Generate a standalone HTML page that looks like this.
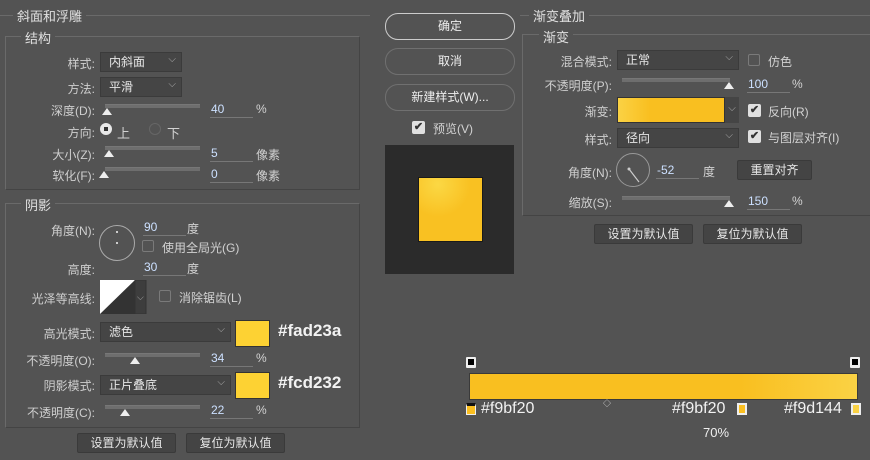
<!DOCTYPE html>
<html><head><meta charset="utf-8"><style>
body{margin:0;width:870px;height:460px;background:#535353;position:relative;overflow:hidden;font-family:"Liberation Sans","Noto Sans CJK SC",sans-serif;font-size:12px;color:#d2d2d2}
.a{position:absolute;white-space:nowrap}
.box{position:absolute;border:1px solid #6a6a6a;border-right-color:#444;border-bottom-color:#444;box-sizing:border-box}
.lg{position:absolute;background:#535353;padding:0 4px;font-size:13px;color:#e0e0e0}
.lab{position:absolute;text-align:right;width:95px;left:0;color:#cfcfcf}
.dd{position:absolute;background:#454545;border:1px solid #3b3b3b;box-sizing:border-box;height:20px;line-height:18px;padding-left:8px;color:#e6e6e6}
.dd:after{content:"⌵";position:absolute;right:5px;top:-2px;font-size:10px;color:#aaa}
.tr{position:absolute;height:3px;background:#6e6e6e;border-top:1px solid #777}
.th{position:absolute;width:0;height:0;border-left:5px solid transparent;border-right:5px solid transparent;border-bottom:7px solid #eee}
.in{position:absolute;border-bottom:1px solid #777;width:42px;color:#cce0ff;padding-left:1px;height:15px}
.btn{position:absolute;background:#444;border:1px solid #3a3a3a;box-sizing:border-box;height:20px;line-height:18px;text-align:center;color:#e6e6e6;border-radius:2px}
.rb{position:absolute;border:1px solid #8a8a8a;border-radius:13px;box-sizing:border-box;height:27px;line-height:25px;text-align:center;color:#eee;width:130px;left:385px}
.cb{position:absolute;width:12px;height:12px;border:1px solid #7a7a7a;box-sizing:border-box;border-radius:2px}
.cbk{position:absolute;width:13px;height:13px;background:#e0e0e0;border-radius:2px;color:#333;font-size:11px;line-height:13px;text-align:center;font-weight:bold}
.hex{position:absolute;font-size:17px;color:#f2f2f2;font-weight:bold}
</style></head><body>
<!-- left -->
<div class="a" style="left:0;top:15px;width:370px;border-top:1px solid #6a6a6a"></div>
<div class="lg" style="left:13px;top:6px">斜面和浮雕</div>
<div class="box" style="left:5px;top:36px;width:355px;height:154px"></div>
<div class="lg" style="left:21px;top:28px">结构</div>
<div class="lab" style="top:55px">样式:</div><div class="dd" style="left:100px;top:52px;width:82px">内斜面</div>
<div class="lab" style="top:80px">方法:</div><div class="dd" style="left:100px;top:77px;width:82px">平滑</div>
<div class="lab" style="top:102px">深度(D):</div><div class="tr" style="left:105px;top:104px;width:95px"></div><div class="th" style="left:102px;top:108px"></div><div class="in" style="left:210px;top:102px">40</div><div class="a" style="left:256px;top:102px">%</div>
<div class="lab" style="top:124px">方向:</div>
<div class="a" style="left:100px;top:123px;width:12px;height:12px;border-radius:50%;background:#e8e8e8"><div style="position:absolute;left:4px;top:4px;width:4px;height:4px;background:#333"></div></div>
<div class="a" style="left:117px;top:123px;font-size:13px">上</div>
<div class="a" style="left:149px;top:123px;width:12px;height:12px;border-radius:50%;border:1px solid #666;box-sizing:border-box"></div>
<div class="a" style="left:167px;top:123px;font-size:13px">下</div>
<div class="lab" style="top:146px">大小(Z):</div><div class="tr" style="left:105px;top:146px;width:95px"></div><div class="th" style="left:104px;top:150px"></div><div class="in" style="left:210px;top:146px">5</div><div class="a" style="left:256px;top:146px">像素</div>
<div class="lab" style="top:167px">软化(F):</div><div class="tr" style="left:105px;top:167px;width:95px"></div><div class="th" style="left:99px;top:171px"></div><div class="in" style="left:210px;top:167px">0</div><div class="a" style="left:256px;top:167px">像素</div>

<div class="box" style="left:5px;top:203px;width:355px;height:225px"></div>
<div class="lg" style="left:21px;top:195px">阴影</div>
<div class="lab" style="top:222px">角度(N):</div>
<div class="a" style="left:99px;top:225px;width:36px;height:36px;border-radius:50%;border:1px solid #aaa;box-sizing:border-box"><div style="position:absolute;left:16px;top:5px;width:2px;height:2px;background:#ccc"></div><div style="position:absolute;left:16px;top:16px;width:2px;height:2px;background:#ccc"></div></div>
<div class="in" style="left:143px;top:220px">90</div><div class="a" style="left:187px;top:220px">度</div>
<div class="cb" style="left:142px;top:240px"></div><div class="a" style="left:162px;top:239px">使用全局光(G)</div>
<div class="lab" style="top:261px">高度:</div><div class="in" style="left:143px;top:260px">30</div><div class="a" style="left:187px;top:260px">度</div>
<div class="lab" style="top:290px">光泽等高线:</div>
<svg class="a" style="left:100px;top:280px" width="47" height="34"><rect width="35" height="34" fill="#fff"/><polygon points="0,34 35,0 35,34" fill="#333"/><rect x="35" width="11" height="34" fill="#3d3d3d" stroke="#333"/><text x="37" y="20" font-size="9" fill="#aaa">⌵</text></svg>
<div class="cb" style="left:159px;top:290px"></div><div class="a" style="left:179px;top:289px">消除锯齿(L)</div>
<div class="lab" style="top:325px">高光模式:</div><div class="dd" style="left:100px;top:322px;width:131px">滤色</div>
<div class="a" style="left:235px;top:320px;width:35px;height:27px;background:#fdd233;box-sizing:border-box;border:1px solid #333"></div><div class="hex" style="left:278px;top:321px">#fad23a</div>
<div class="lab" style="top:352px">不透明度(O):</div><div class="tr" style="left:105px;top:353px;width:95px"></div><div class="th" style="left:130px;top:357px"></div><div class="in" style="left:210px;top:351px">34</div><div class="a" style="left:256px;top:351px">%</div>
<div class="lab" style="top:377px">阴影模式:</div><div class="dd" style="left:100px;top:375px;width:131px">正片叠底</div>
<div class="a" style="left:235px;top:372px;width:35px;height:27px;background:#fdd233;box-sizing:border-box;border:1px solid #333"></div><div class="hex" style="left:278px;top:373px">#fcd232</div>
<div class="lab" style="top:404px">不透明度(C):</div><div class="tr" style="left:105px;top:405px;width:95px"></div><div class="th" style="left:120px;top:409px"></div><div class="in" style="left:210px;top:403px">22</div><div class="a" style="left:256px;top:403px">%</div>
<div class="btn" style="left:77px;top:433px;width:99px">设置为默认值</div>
<div class="btn" style="left:186px;top:433px;width:99px">复位为默认值</div>

<!-- middle -->
<div class="rb" style="top:13px;border-color:#ccc">确定</div>
<div class="rb" style="top:48px;border-color:#707070">取消</div>
<div class="rb" style="top:84px;border-color:#707070">新建样式(W)...</div>
<div class="cbk" style="left:412px;top:121px">✔</div><div class="a" style="left:433px;top:120px">预览(V)</div>
<div class="a" style="left:385px;top:145px;width:129px;height:129px;background:#2b2b2b"></div>
<div class="a" style="left:418px;top:177px;width:65px;height:65px;background:radial-gradient(circle at 30% 10%,#fbd844,#f9c122 45%);border:1px solid #1a1a1a;box-sizing:border-box"></div>

<!-- right -->
<div class="a" style="left:520px;top:15px;width:350px;border-top:1px solid #6a6a6a"></div>
<div class="lg" style="left:529px;top:6px">渐变叠加</div>
<div class="box" style="left:522px;top:34px;width:360px;height:182px"></div>
<div class="lg" style="left:539px;top:27px">渐变</div>
<div class="lab" style="left:517px;top:53px">混合模式:</div><div class="dd" style="left:617px;top:50px;width:122px">正常</div>
<div class="cb" style="left:748px;top:54px"></div><div class="a" style="left:768px;top:53px">仿色</div>
<div class="lab" style="left:517px;top:77px">不透明度(P):</div><div class="tr" style="left:622px;top:78px;width:108px"></div><div class="th" style="left:724px;top:82px"></div><div class="in" style="left:747px;top:77px">100</div><div class="a" style="left:792px;top:77px">%</div>
<div class="lab" style="left:517px;top:103px">渐变:</div>
<div class="a" style="left:617px;top:97px;width:108px;height:26px;background:linear-gradient(90deg,#fad244,#f9bf20 30%,#f9bf20);border:1px solid #333;box-sizing:border-box"></div>
<div class="a" style="left:725px;top:97px;width:14px;height:26px;background:#454545;color:#aaa;font-size:10px;text-align:center;line-height:24px">⌵</div>
<div class="cbk" style="left:748px;top:104px">✔</div><div class="a" style="left:768px;top:103px">反向(R)</div>
<div class="lab" style="left:517px;top:131px">样式:</div><div class="dd" style="left:617px;top:128px;width:122px">径向</div>
<div class="cbk" style="left:748px;top:130px">✔</div><div class="a" style="left:768px;top:129px">与图层对齐(I)</div>
<div class="lab" style="left:517px;top:164px">角度(N):</div>
<svg class="a" style="left:615px;top:152px" width="36" height="36"><circle cx="18" cy="18" r="16.5" fill="none" stroke="#999"/><line x1="14" y1="17" x2="24" y2="30" stroke="#ccc" stroke-width="1.2"/><circle cx="14" cy="17" r="1.5" fill="#ccc"/></svg>
<div class="in" style="left:656px;top:163px">-52</div><div class="a" style="left:703px;top:163px">度</div>
<div class="btn" style="left:737px;top:160px;width:75px">重置对齐</div>
<div class="lab" style="left:517px;top:194px">缩放(S):</div><div class="tr" style="left:622px;top:196px;width:108px"></div><div class="th" style="left:724px;top:200px"></div><div class="in" style="left:747px;top:194px">150</div><div class="a" style="left:792px;top:194px">%</div>
<div class="btn" style="left:594px;top:224px;width:99px">设置为默认值</div>
<div class="btn" style="left:703px;top:224px;width:99px">复位为默认值</div>

<!-- gradient bar -->
<div class="a" style="left:466px;top:357px;width:10px;height:11px;background:#eee;border-radius:1px"><div style="margin:2px;width:6px;height:6px;background:#000"></div></div>
<div class="a" style="left:850px;top:357px;width:10px;height:11px;background:#eee;border-radius:1px"><div style="margin:2px;width:6px;height:6px;background:#000"></div></div>
<div class="a" style="left:469px;top:373px;width:389px;height:27px;background:linear-gradient(90deg,#f9bf20,#f9bf20 70%,#fad244);border:1px solid #3a3a3a;box-sizing:border-box"></div>
<div class="a" style="left:466px;top:403px;width:10px;height:12px;background:#fbbf20;border:1px solid #eee;border-top:3px solid #111;box-sizing:border-box"></div>
<div class="hex" style="left:481px;top:400px;font-weight:normal;font-size:16px">#f9bf20</div>
<div class="a" style="left:603px;top:398px;font-size:8px;color:#ddd">◇</div>
<div class="hex" style="left:672px;top:400px;font-weight:normal;font-size:16px">#f9bf20</div>
<div class="a" style="left:737px;top:403px;width:10px;height:12px;background:#fbbf20;border:2px solid #eee;box-sizing:border-box"></div>
<div class="hex" style="left:784px;top:400px;font-weight:normal;font-size:16px">#f9d144</div>
<div class="a" style="left:851px;top:403px;width:10px;height:12px;background:#f9d144;border:2px solid #eee;box-sizing:border-box"></div>
<div class="a" style="left:703px;top:425px;font-size:13px;color:#eee">70%</div>
</body></html>
